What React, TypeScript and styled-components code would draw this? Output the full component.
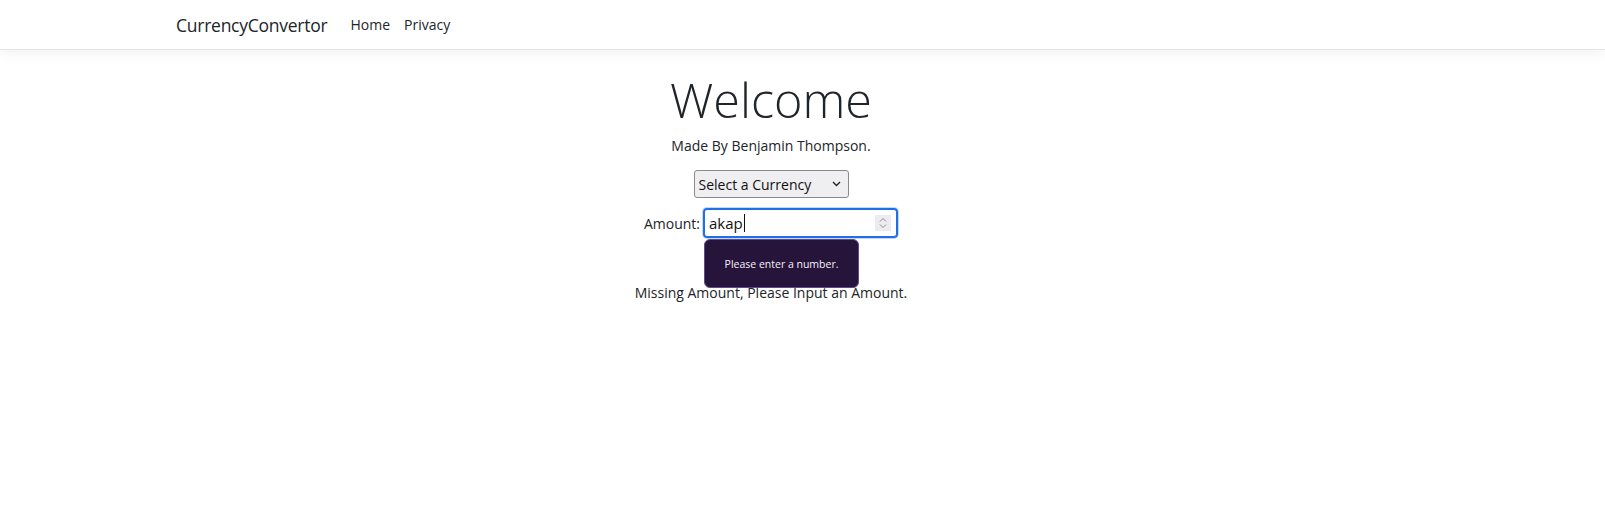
import React from "react";
import styled, { createGlobalStyle } from "styled-components";

const GlobalStyle = createGlobalStyle`
  html, body {
    margin: 0;
    padding: 0;
    background: #fff;
    color: #212529;
    font-family: "Open Sans", "Noto Sans", sans-serif;
  }
`;

const Container = styled.div`
  width: 1190px;
  margin-left: 176px;
`;

const Navbar = styled.nav`
  height: 49px;
  background: #fff;
  border-bottom: 1px solid #e5e5e5;
  box-shadow: 0 4px 12px rgba(0, 0, 0, 0.05);
`;

const NavInner = styled(Container)`
  height: 100%;
  display: flex;
  align-items: center;
`;

const Brand = styled.a`
  font-size: 17.5px;
  letter-spacing: -0.25px;
  color: #212529;
  text-decoration: none;
  margin-right: 16px;
`;

const NavLink = styled.a`
  font-size: 14px;
  color: #212529;
  text-decoration: none;
  padding: 0 7px;
`;

const Main = styled(Container)`
  display: flex;
  flex-direction: column;
  align-items: center;
  text-align: center;
`;

const Title = styled.h1`
  font-size: 48.5px;
  font-weight: 300;
  line-height: 62px;
  margin: 18px 0 0;
`;

const Byline = styled.p`
  font-size: 14px;
  line-height: 22px;
  margin: 5px 0 0;
`;

const SelectWrap = styled.div`
  position: relative;
  margin-top: 13px;
`;

const Select = styled.select`
  appearance: none;
  width: 155px;
  height: 28px;
  box-sizing: border-box;
  padding: 0 20px 0 4px;
  font-family: "Open Sans", sans-serif;
  font-size: 14px;
  color: #111;
  background: #efeff2;
  border: 1px solid #8a8a8e;
  border-radius: 3px;
`;

const Chevron = styled.svg`
  position: absolute;
  right: 8px;
  top: 11px;
  pointer-events: none;
`;

const AmountRow = styled.div`
  display: flex;
  align-items: center;
  gap: 3px;
  margin-top: 10px;
  font-size: 14px;
`;

const FieldBox = styled.div`
  position: relative;
  display: flex;
  align-items: center;
  width: 195px;
  height: 30px;
  box-sizing: border-box;
  padding: 0 4px;
  border: 2px solid #1f6fe5;
  border-radius: 4px;
  box-shadow: 0 0 0 1px #c3d7fb;
  font-size: 15px;
  color: #111;
`;

const Caret = styled.span`
  display: inline-block;
  width: 1px;
  height: 18px;
  background: #111;
  margin-left: 1px;
`;

const Spinner = styled.div`
  position: absolute;
  right: 5px;
  top: 5px;
  width: 16px;
  height: 16px;
  background: #ececf0;
  display: flex;
  align-items: center;
  justify-content: center;
`;

const Tooltip = styled.div`
  position: absolute;
  left: -1px;
  top: 29px;
  width: 155px;
  height: 49px;
  box-sizing: border-box;
  background: #26143a;
  border: 1px solid #5d4c8c;
  border-radius: 6px;
  color: #f4f2f8;
  font-size: 10.5px;
  display: flex;
  align-items: center;
  justify-content: center;
  z-index: 2;
`;

const Message = styled.p`
  font-size: 14px;
  line-height: 22px;
  margin: 44px 0 0;
`;

export default function App() {
  return (
    <>
      <GlobalStyle />
      <Navbar>
        <NavInner>
          <Brand href="#">CurrencyConvertor</Brand>
          <NavLink href="#">Home</NavLink>
          <NavLink href="#">Privacy</NavLink>
        </NavInner>
      </Navbar>
      <Main>
        <Title>Welcome</Title>
        <Byline>Made By Benjamin Thompson.</Byline>
        <SelectWrap>
          <Select defaultValue="">
            <option value="">Select a Currency</option>
          </Select>
          <Chevron width="9" height="6" viewBox="0 0 9 6">
            <path d="M1 1l3.5 3.5L8 1" fill="none" stroke="#222" strokeWidth="1.4" />
          </Chevron>
        </SelectWrap>
        <AmountRow>
          <span>Amount:</span>
          <FieldBox>
            <span>akap</span>
            <Caret />
            <Spinner>
              <svg width="8" height="12" viewBox="0 0 8 12">
                <path d="M1 4.5l3-3 3 3M1 7.5l3 3 3-3" fill="none" stroke="#8a8a90" strokeWidth="1" />
              </svg>
            </Spinner>
            <Tooltip>Please enter a number.</Tooltip>
          </FieldBox>
        </AmountRow>
        <Message>Missing Amount, Please Input an Amount.</Message>
      </Main>
    </>
  );
}
